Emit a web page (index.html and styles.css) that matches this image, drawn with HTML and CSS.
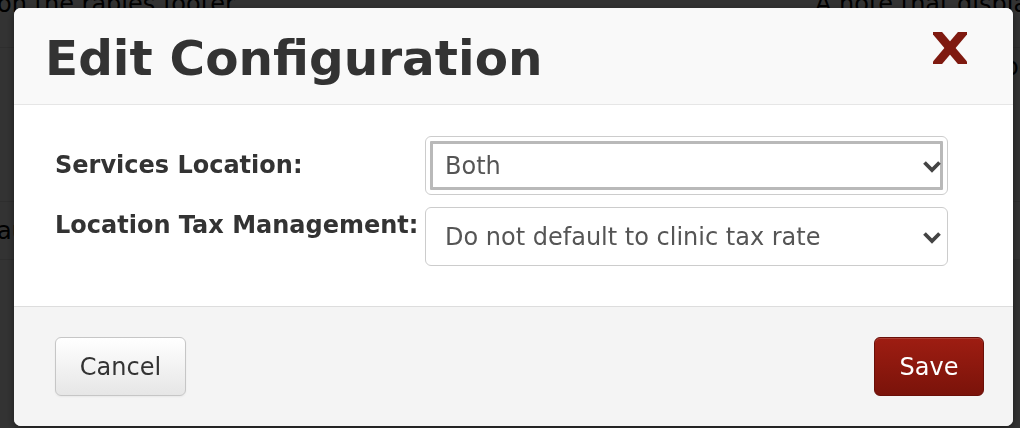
FILE: index.html
```html
<!DOCTYPE html>
<html lang="en">
<head>
<meta charset="utf-8">
<title>Edit Configuration</title>
<link rel="stylesheet" href="styles.css">
</head>
<body>
  <div class="page">
    <div class="page-row">
      <div class="cell-left">on the rabies footer</div>
      <div class="cell-right">A note that displays on the rabies footer</div>
    </div>
    <div class="page-row tall">
      <div class="cell-left"></div>
      <div class="cell-right">Rabies tag number format used in every record and reminder</div>
    </div>
    <div class="page-row">
      <div class="cell-left">auto</div>
      <div class="cell-right">Default</div>
    </div>
  </div>

  <div class="overlay"></div>

  <div class="modal" role="dialog" aria-labelledby="modal-title">
    <div class="modal-header">
      <h1 class="modal-title" id="modal-title">Edit Configuration</h1>
      <button class="close-btn" aria-label="Close">
        <svg width="34" height="32" viewBox="0 0 34 32" aria-hidden="true">
          <g stroke="#7f1a10" stroke-width="8.5" fill="none">
            <line x1="1" y1="-3" x2="33" y2="35"/>
            <line x1="33" y1="-3" x2="1" y2="35"/>
          </g>
        </svg>
      </button>
    </div>
    <div class="modal-body">
      <div class="form-grid">
        <label class="field-label first" for="svc-loc">Services Location:</label>
        <div class="select-wrap">
          <select id="svc-loc" class="select focused">
            <option>Both</option>
          </select>
          <svg class="chevron" width="20" height="13" viewBox="0 0 20 13" aria-hidden="true"><path d="M2.5 2.5 L10 10 L17.5 2.5" stroke="#444" stroke-width="3.8" fill="none"/></svg>
        </div>
        <label class="field-label second" for="tax-mgmt">Location Tax Management:</label>
        <div class="select-wrap">
          <select id="tax-mgmt" class="select">
            <option>Do not default to clinic tax rate</option>
          </select>
          <svg class="chevron" width="20" height="13" viewBox="0 0 20 13" aria-hidden="true"><path d="M2.5 2.5 L10 10 L17.5 2.5" stroke="#444" stroke-width="3.8" fill="none"/></svg>
        </div>
      </div>
    </div>
    <div class="modal-footer">
      <button class="btn btn-cancel">Cancel</button>
      <button class="btn btn-save">Save</button>
    </div>
  </div>
</body>
</html>
```

FILE: styles.css
```css
html, body {
  margin: 0;
  padding: 0;
}

body {
  background: #ffffff;
  font-family: "DejaVu Sans", Verdana, sans-serif;
  font-size: 24px;
  color: #000;
  overflow: hidden;
  width: 1020px;
  height: 428px;
}

.page {
  margin: -10px 0 0 -3px;
}

.page-row {
  display: grid;
  grid-template-columns: 818px 1fr;
  border-bottom: 1px solid #e4e4e4;
  height: 57px;
  line-height: 28px;
}

.page-row.tall {
  height: 153px;
  line-height: 39px;
}

.cell-left,
.cell-right {
  white-space: nowrap;
  overflow: hidden;
}

.page-row:last-child .cell-left {
  padding-top: 15px;
}

.overlay {
  position: fixed;
  inset: 0;
  background: rgba(0, 0, 0, 0.8);
}

.modal {
  position: fixed;
  left: 14px;
  top: 8px;
  width: 999px;
  background: #fff;
  border-radius: 7px;
  overflow: hidden;
  box-shadow: 0 3px 8px rgba(0, 0, 0, 0.45);
}

.modal-header {
  display: flex;
  justify-content: space-between;
  align-items: flex-start;
  background: #f9f9f9;
  border-bottom: 1px solid #e6e6e6;
  padding: 22px 46px 18px 31px;
}

.modal-title {
  margin: 0;
  font-size: 48.5px;
  line-height: 56px;
  font-weight: bold;
  color: #333;
}

.close-btn {
  margin-top: 2px;
  padding: 0;
  border: 0;
  background: none;
  width: 34px;
  height: 32px;
  filter: blur(0.4px);
}

.close-btn svg {
  display: block;
}

.modal-body {
  padding: 31px 64px 40px 41px;
}

.form-grid {
  display: grid;
  grid-template-columns: 370px 523px;
  row-gap: 12px;
  align-items: start;
}

.field-label {
  font-weight: bold;
  font-size: 24px;
  line-height: 28px;
  color: #333;
  white-space: nowrap;
}

.field-label.first {
  padding-top: 15px;
}

.field-label.second {
  padding-top: 4px;
}

.select-wrap {
  position: relative;
}

.select {
  display: block;
  width: 523px;
  height: 59px;
  box-sizing: border-box;
  appearance: none;
  -webkit-appearance: none;
  border: 1px solid #cccccc;
  border-radius: 6px;
  background: #fff;
  font-family: "DejaVu Sans", Verdana, sans-serif;
  font-size: 24px;
  color: #555;
  padding: 0 40px 0 19px;
  margin: 0;
}

.select.focused {
  outline: 3px solid #b9b9b9;
  outline-offset: -8px;
}

.chevron {
  position: absolute;
  right: 6px;
  top: 50%;
  margin-top: -6px;
  pointer-events: none;
}

.modal-footer {
  display: flex;
  justify-content: space-between;
  align-items: center;
  background: #f4f4f4;
  border-top: 1px solid #dddddd;
  padding: 30px 29px 30px 41px;
}

.btn {
  height: 59px;
  box-sizing: border-box;
  border-radius: 6px;
  font-family: "DejaVu Sans", Verdana, sans-serif;
  font-size: 24px;
  padding: 0;
  margin: 0;
}

.btn-cancel {
  width: 131px;
  color: #333;
  border: 1px solid #c6c6c6;
  background: linear-gradient(#ffffff, #e6e6e6);
  box-shadow: 0 1px 2px rgba(0, 0, 0, 0.05);
}

.btn-save {
  width: 110px;
  color: #fff;
  border: 1px solid #6a0f08;
  background: linear-gradient(#9e1d12, #7a130a);
  box-shadow: inset 0 1px 0 rgba(255, 255, 255, 0.15);
}
```
